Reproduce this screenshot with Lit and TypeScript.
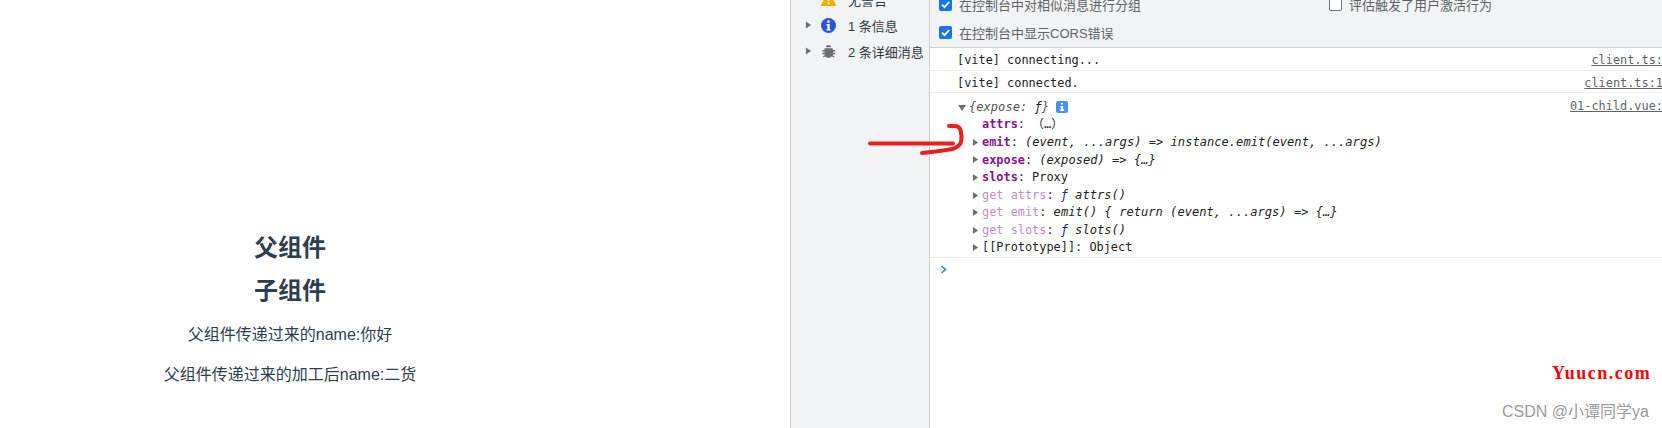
import { LitElement, html, css, svg } from "lit";
import { customElement } from "lit/decorators.js";

const tri = (open = false) => html`<svg class="tri" width="8" height="9" viewBox="0 0 8 9"><path d=${open ? "M0 2h8L4 8z" : "M1 .5l6 4-6 4z"} fill="#6e6e6e"/></svg>`;

@customElement("app-root")
export class AppRoot extends LitElement {
  static styles = css`
    :host { display: block; width: 1662px; height: 428px; overflow: hidden; position: relative; background: #fff; }
    .wrap { display: grid; grid-template-columns: 790px 1px 138px 1px 1fr; height: 428px; }
    .page { padding: 231px 210px 0 0; text-align: center; color: #2c3e50; font-family: "Liberation Sans", "Noto Sans CJK SC", sans-serif; }
    h1 { margin: 0 0 9px; font-size: 24px; line-height: 34px; font-weight: 700; }
    .page p { margin: 0 0 16px; font-size: 16px; line-height: 24px; }
    .h2 { margin-bottom: 15px; }
    .vline { background: #cbcdd1; }
    .side { background: #f1f3f4; overflow: hidden; font: 13px "Liberation Sans", "Noto Sans CJK SC", sans-serif; color: #303942; }
    .side-list { margin-top: -14px; }
    .side-row { height: 26px; display: flex; align-items: center; padding-left: 14px; gap: 9px; white-space: nowrap; }
    .side-row .tri { width: 7px; height: 8px; }
    .side-row .blank { width: 7px; }
    .side-row span { margin-left: 3px; }
    .main { min-width: 0; display: flex; flex-direction: column; overflow: hidden; }
    .toolbar { height: 48px; box-sizing: border-box; background: #f1f3f4; border-bottom: 1px solid #cbcdd1; display: grid; grid-template-columns: 390px 1fr; grid-auto-rows: 28px; padding: 0 0 0 9px; overflow: hidden; font: 13px "Liberation Sans", "Noto Sans CJK SC", sans-serif; color: #5f6368; align-content: start; }
    .opt { display: flex; align-items: center; gap: 7px; white-space: nowrap; margin-top: -10px; height: 28px; }
    .cb { width: 13px; height: 13px; border-radius: 2px; box-sizing: border-box; flex: none; display: block; }
    .cb.on { background: #1a73e8; }
    .cb.off { border: 1px solid #6e7378; background: #fff; }
    .console { font: 11.9px/1 "DejaVu Sans Mono", "Noto Sans CJK SC", monospace; color: #222; }
    .log { display: flex; justify-content: space-between; align-items: center; height: 22px; box-sizing: border-box; padding: 4px 0 0 27px; border-bottom: 1px solid #ececec; white-space: pre; }
    .log.first { height: 23px; }
    .src { color: #5f6368; text-decoration: underline; margin-right: -1px; }
    .tree { padding: 5px 0 1px 27px; border-bottom: 1px solid #ececec; height: 165px; box-sizing: border-box; }
    .tree-row { height: 17.6px; display: flex; align-items: center; white-space: pre; }
    .tree-row.head { justify-content: space-between; height: 18px; }
    .tree-row.sub { padding-left: 15px; }
    .tree-row.sub.leaf { padding-left: 25px; }
    .tree-row .tri { margin-right: 3px; flex: none; width: 7px; }
    .head .tri { width: 10px; margin-right: 2px; }
    .k { color: #881391; font-weight: 700; }
    .g { color: #c58ac9; }
    .i { font-style: italic; font-size: 12.1px; }
    .b { color: #0d22aa; font-style: italic; }
    .expo { color: #555; }
    .fn { color: #222; }
    .pl { display: flex; align-items: center; }
    .info { display: inline-flex; margin-left: 7px; }
    .prompt { padding: 7px 0 0 10px; }
    .over { position: absolute; left: 0; top: 0; pointer-events: none; }
    .yuu { position: absolute; left: 1552px; top: 363px; font: 700 18px "Liberation Serif", serif; color: #f00; letter-spacing: 1.5px; }
    .csdn { position: absolute; right: 13px; top: 398px; font: 16px "Liberation Sans", "Noto Sans CJK SC", sans-serif; color: #9a9a9a; white-space: nowrap; }
  `;

  render() {
    return html`
      <div class="wrap">
        <section class="page">
          <h1>父组件</h1>
          <h1 class="h2">子组件</h1>
          <p>父组件传递过来的name:你好</p>
          <p>父组件传递过来的加工后name:二货</p>
        </section>
        <div class="vline"></div>
        <aside class="side">
          <div class="side-list">
            <div class="side-row"><i class="blank"></i>
              <svg width="15" height="14" viewBox="0 0 15 14"><path d="M7.5 0.5 14.8 13.5H.2z" fill="#f9ab00" stroke="#f9ab00" stroke-linejoin="round"/><path d="M6.6 4h1.8v5H6.6zM6.6 10h1.8v2H6.6z" fill="#fff"/></svg>
              <span>无警告</span></div>
            <div class="side-row">${tri()}
              <svg width="15" height="15" viewBox="0 0 15 15"><circle cx="7.5" cy="7.5" r="7.5" fill="#2b55d4"/><path d="M6.3 2.6h2.4v2.2H6.3zM5.6 6h3.1v5.2h1v1.4H5.4v-1.4h1V7.4h-.8z" fill="#fff"/></svg>
              <span>1 条信息</span></div>
            <div class="side-row">${tri()}
              <svg width="15" height="15" viewBox="0 0 15 15"><path d="M4.800 3.200C5.100 1.800 6.200 1 7.500 1s2.400.8 2.700 2.200zM3.400 4.200h8.200c.2.700.3 1.300.3 1.900h2.300v1.500h-2.200v1.200h2.200v1.500h-2.400l-.2.700 2 1.500-.9 1.100-1.800-1.300c-.9 1-2.100 1.500-3.400 1.500s-2.500-.5-3.400-1.500L2.800 13.600l-.9-1.100 2-1.500-.2-.7H1.300V8.800h2.200V7.600H1.300V6.100h2.200c0-.6 0-1.200-.1-1.900z" fill="#6e6e6e"/></svg>
              <span>2 条详细消息</span></div>
          </div>
        </aside>
        <div class="vline"></div>
        <main class="main">
          <div class="toolbar">
            <label class="opt"><i class="cb on">${this.check()}</i>在控制台中对相似消息进行分组</label>
            <label class="opt"><i class="cb off"></i>评估触发了用户激活行为</label>
            <label class="opt"><i class="cb on">${this.check()}</i>在控制台中显示CORS错误</label>
          </div>
          <div class="console">
            <div class="log first"><span>[vite] connecting...</span><span class="src">client.ts:</span></div>
            <div class="log"><span>[vite] connected.</span><span class="src">client.ts:1</span></div>
            <div class="tree">
              <div class="tree-row head"><span class="pl">${tri(true)}<span class="i expo">{expose: <span class="b fn">ƒ</span>}</span><span class="info"><svg width="12" height="12" viewBox="0 0 12 12"><rect width="12" height="12" rx="2" fill="#4a90f0"/><path d="M5 2h2v1.6H5zM4.4 5h2.8v3.6h1V10H4v-1.4h1V6.4h-.6z" fill="#fff"/></svg></span></span><span class="src">01-child.vue:</span></div>
              <div class="tree-row sub leaf"><span><span class="k">attrs</span>: （…）</span></div>
              <div class="tree-row sub">${tri()}<span><span class="k">emit</span>: <span class="i">(event, ...args) =&gt; instance.emit(event, ...args)</span></span></div>
              <div class="tree-row sub">${tri()}<span><span class="k">expose</span>: <span class="i">(exposed) =&gt; {…}</span></span></div>
              <div class="tree-row sub">${tri()}<span><span class="k">slots</span>: Proxy</span></div>
              <div class="tree-row sub">${tri()}<span><span class="g">get attrs</span>: <span class="b">ƒ</span> <span class="i">attrs()</span></span></div>
              <div class="tree-row sub">${tri()}<span><span class="g">get emit</span>: <span class="i">emit() { return (event, ...args) =&gt; {…}</span></span></div>
              <div class="tree-row sub">${tri()}<span><span class="g">get slots</span>: <span class="b">ƒ</span> <span class="i">slots()</span></span></div>
              <div class="tree-row sub">${tri()}<span>[[Prototype]]: Object</span></div>
            </div>
            <div class="prompt"><svg width="8" height="9" viewBox="0 0 8 9"><path d="M1.5 1 5.5 4.5 1.5 8" fill="none" stroke="#3b7de8" stroke-width="1.6"/></svg></div>
          </div>
        </main>
      </div>
      <svg class="over" width="1662" height="428" viewBox="0 0 1662 428">
        <path d="M870 143.5H953" fill="none" stroke="#e8201f" stroke-width="4" stroke-linecap="round"/>
        <path d="M949 126H955C960 126 961 130 961.500 136C962 144 959 147 952 149C942 151 932 152 922 153" fill="none" stroke="#e8201f" stroke-width="4" stroke-linecap="round"/>
      </svg>
      <div class="yuu">Yuucn.com</div>
      <div class="csdn">CSDN @小谭同学ya</div>
    `;
  }

  check() {
    return svg`<svg width="13" height="13" viewBox="0 0 13 13" style="display:block"><path d="M3 6.700 5.500 9.200 10.200 4" fill="none" stroke="#fff" stroke-width="1.8"/></svg>`;
  }
}
